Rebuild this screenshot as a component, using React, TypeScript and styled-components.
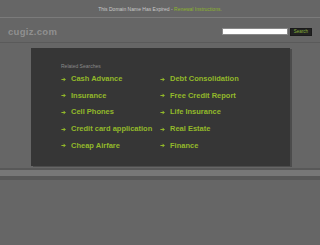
import styled, { createGlobalStyle } from "styled-components"

const GlobalStyle = createGlobalStyle`
  html, body {
    margin: 0;
    padding: 0;
    background: #666;
  }
  body {
    font-family: "Liberation Sans", Arial, sans-serif;
  }
`

const searches = [
  ["Cash Advance", "Debt Consolidation"],
  ["Insurance", "Free Credit Report"],
  ["Cell Phones", "Life Insurance"],
  ["Credit card application", "Real Estate"],
  ["Cheap Airfare", "Finance"],
]

const ArrowIcon = () => (
  <ArrowSvg viewBox="0 0 6 6">
    <path d="M0.5 3H5M3 1L5 3L3 5" fill="none" stroke="#93b92a" strokeWidth="1.2" />
  </ArrowSvg>
)

const App = () => {
  return (
    <Page>
      <GlobalStyle />
      <TopBar>
        This Domain Name Has Expired - <GreenLink>Renewal Instructions.</GreenLink>
      </TopBar>
      <Header>
        <Logo>cugiz.com</Logo>
        <SearchForm>
          <SearchInput type="text" />
          <SearchButton>Search</SearchButton>
        </SearchForm>
      </Header>
      <Main>
        <Panel>
          <Heading>Related Searches</Heading>
          <Grid>
            {searches.flat().map(item => (
              <Item key={item}>
                <ArrowIcon />
                <span>{item}</span>
              </Item>
            ))}
          </Grid>
        </Panel>
      </Main>
      <Footer />
    </Page>
  )
}

export default App

const Page = styled.div`
  width: 320px;
  height: 245px;
  background: #666;
  overflow: hidden;
`

const TopBar = styled.div`
  height: 17px;
  line-height: 18px;
  text-align: center;
  font-size: 5px;
  color: #c8c8c8;
`

const GreenLink = styled.a`
  color: #8db52c;
`

const Header = styled.div`
  height: 24px;
  border-top: 1px solid #7b7b7b;
  border-bottom: 1px solid #5a5a5a;
  display: flex;
  align-items: center;
  justify-content: space-between;
  padding: 0 8px 0 8px;
`

const Logo = styled.div`
  font-size: 9.5px;
  font-weight: bold;
  color: #909090;
  letter-spacing: 0.3px;
  margin-top: 2px;
`

const SearchForm = styled.div`
  display: flex;
  align-items: center;
  gap: 2px;
  margin-top: 3px;
`

const SearchInput = styled.input`
  width: 64px;
  height: 5px;
  padding: 0;
  border: 1px solid #888;
  background: #fff;
`

const SearchButton = styled.button`
  width: 22px;
  height: 8px;
  padding: 0;
  border: 1px solid #1a1a1a;
  background: #222;
  color: #86b33a;
  font-size: 4.5px;
  font-family: "Liberation Sans", Arial, sans-serif;
`

const Main = styled.div`
  padding: 5px 30px 0 31px;
`

const Panel = styled.div`
  height: 118px;
  box-sizing: border-box;
  background: #363636;
  box-shadow: 2px 1px 0 #4c4c4c;
  padding: 15px 0 0 30px;
`

const Heading = styled.div`
  font-size: 5px;
  color: #8a8a8a;
  margin-bottom: 5px;
`

const Grid = styled.div`
  display: grid;
  grid-template-columns: 99px 1fr;
  row-gap: 6.7px;
`

const Item = styled.div`
  display: flex;
  align-items: center;
  gap: 5px;
  font-size: 7.5px;
  font-weight: bold;
  color: #93b92a;
  line-height: 10px;
  white-space: nowrap;
`

const ArrowSvg = styled.svg`
  width: 5px;
  height: 5px;
  flex: none;
`

const Footer = styled.div`
  margin-top: 2px;
  height: 6px;
  border-top: 2px solid #585858;
  border-bottom: 4px solid #585858;
  background: #777;
`
